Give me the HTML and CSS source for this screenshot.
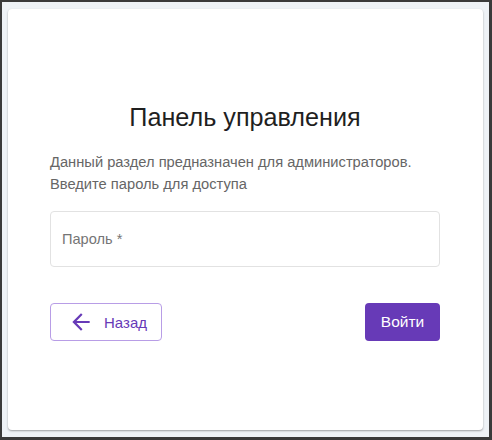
FILE: index.html
```html
<!DOCTYPE html>
<html lang="ru">
<head>
<meta charset="utf-8">
<title>Панель управления</title>
<link rel="stylesheet" href="styles.css">
</head>
<body>
<div class="frame">
  <div class="card">
    <div class="content">
      <h1 class="title">Панель управления</h1>
      <p class="desc">Данный раздел предназначен для администраторов.<br>Введите пароль для доступа</p>
      <div class="field"><span class="label">Пароль *</span></div>
      <div class="actions">
        <button class="btn btn-back" type="button">
          <svg class="arrow" width="26" height="26" viewBox="0 0 24 24"><path d="M20 11H7.83l5.59-5.59L12 4l-8 8 8 8 1.41-1.41L7.83 13H20v-2z" fill="currentColor"/></svg>
          <span>Назад</span>
        </button>
        <button class="btn btn-login" type="button">Войти</button>
      </div>
    </div>
  </div>
</div>
</body>
</html>
```
FILE: styles.css
```css
html, body {
  margin: 0;
  padding: 0;
}
body {
  width: 492px;
  height: 440px;
  font-family: "Liberation Sans", Arial, sans-serif;
}
.frame {
  box-sizing: border-box;
  width: 492px;
  height: 440px;
  border-style: solid;
  border-color: #3a3a3a;
  border-width: 2px 3px 3px 2px;
  background: #eef2f6;
  padding: 7px 6px 7px 6px;
}
.card {
  box-sizing: border-box;
  width: 475px;
  height: 421px;
  background: #fff;
  border-radius: 4px;
  box-shadow: 0 1px 2px rgba(0,0,0,0.35);
  padding-left: 42px;
}
.content {
  width: 390px;
  padding-top: 92px;
}
.title {
  margin: 0;
  text-align: center;
  font-size: 25.2px;
  font-weight: 400;
  line-height: 32px;
  color: #1f1f1f;
}
.desc {
  margin: 18px 0 0;
  font-size: 14.7px;
  line-height: 22px;
  color: #666;
}
.field {
  box-sizing: border-box;
  margin-top: 16px;
  height: 56px;
  border: 1px solid #e2e2e2;
  border-radius: 4px;
  display: flex;
  align-items: center;
  padding-left: 11px;
}
.label {
  font-size: 14.6px;
  color: #757575;
}
.actions {
  margin-top: 36px;
  display: flex;
  justify-content: space-between;
}
.btn {
  box-sizing: border-box;
  height: 38px;
  border-radius: 4px;
  font-family: inherit;
  font-size: 15px;
  display: flex;
  align-items: center;
  cursor: pointer;
}
.btn-back {
  width: 112px;
  background: #fff;
  border: 1px solid #b89de6;
  color: #673ab7;
  padding: 0 0 0 17px;
  gap: 10px;
  font-weight: 400;
}
.arrow {
  display: block;
}
.btn-login {
  width: 75px;
  background: #673ab7;
  border: none;
  color: #fff;
  justify-content: center;
  font-size: 15.5px;
  font-weight: 500;
}
```
